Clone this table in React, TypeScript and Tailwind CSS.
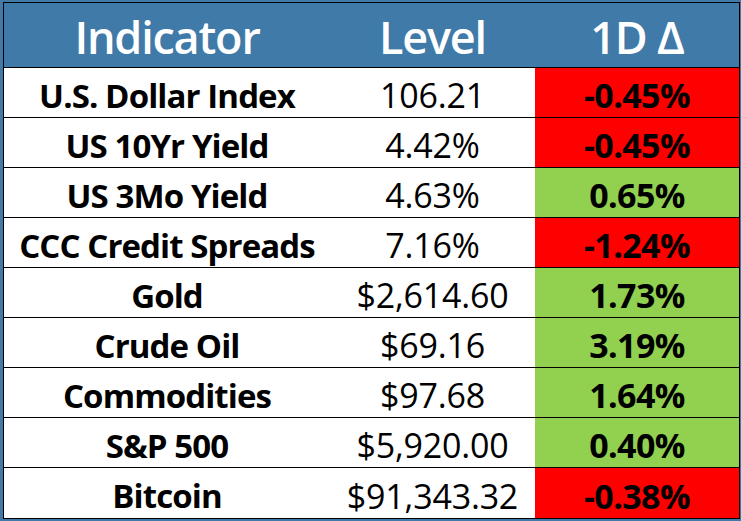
const rows: { name: string; level: string; change: string; up: boolean }[] = [
  { name: 'U.S. Dollar Index', level: '106.21', change: '-0.45%', up: false },
  { name: 'US 10Yr Yield', level: '4.42%', change: '-0.45%', up: false },
  { name: 'US 3Mo Yield', level: '4.63%', change: '0.65%', up: true },
  { name: 'CCC Credit Spreads', level: '7.16%', change: '-1.24%', up: false },
  { name: 'Gold', level: '$2,614.60', change: '1.73%', up: true },
  { name: 'Crude Oil', level: '$69.16', change: '3.19%', up: true },
  { name: 'Commodities', level: '$97.68', change: '1.64%', up: true },
  { name: 'S&P 500', level: '$5,920.00', change: '0.40%', up: true },
  { name: 'Bitcoin', level: '$91,343.32', change: '-0.38%', up: false },
];

export default function App() {
  return (
    <div
      className="w-[741px] h-[521px] bg-[#407aa8] pt-[2px] pl-[3px] pr-[1px] pb-[2px]"
      style={{ fontFamily: '"Open Sans", "Noto Sans", sans-serif' }}
    >
      <div className="border border-black h-[517px] flex flex-col">
        {/* Header */}
        <div className="grid grid-cols-[326px_205px_1fr] h-[65px] bg-[#407aa8] text-white font-semibold text-[45px] tracking-[-1.2px] items-center border-b border-black">
          <div className="text-center leading-none pt-[2px]">Indicator</div>
          <div className="text-center leading-none pt-[2px]">Level</div>
          <div className="text-center leading-none pt-[2px]">1D Δ</div>
        </div>

        {rows.map((r, i) => (
          <div
            key={r.name}
            className={`grid grid-cols-[326px_205px_1fr] h-[50px] bg-white text-black ${
              i < rows.length - 1 ? 'border-b border-black' : ''
            }`}
          >
            <div className="flex items-center justify-center font-bold text-[33px] tracking-[-0.9px] leading-none pt-[5px]">
              {r.name}
            </div>
            <div className="flex items-center justify-center text-[34px] tracking-[-0.2px] leading-none pt-[5px]">
              {r.level}
            </div>
            <div
              className={`flex items-center justify-center font-bold text-[34px] tracking-[-0.6px] leading-none pt-[5px] ${
                r.up ? 'bg-[#92d050]' : 'bg-[#ff0000]'
              }`}
            >
              {r.change}
            </div>
          </div>
        ))}
      </div>
    </div>
  );
}
